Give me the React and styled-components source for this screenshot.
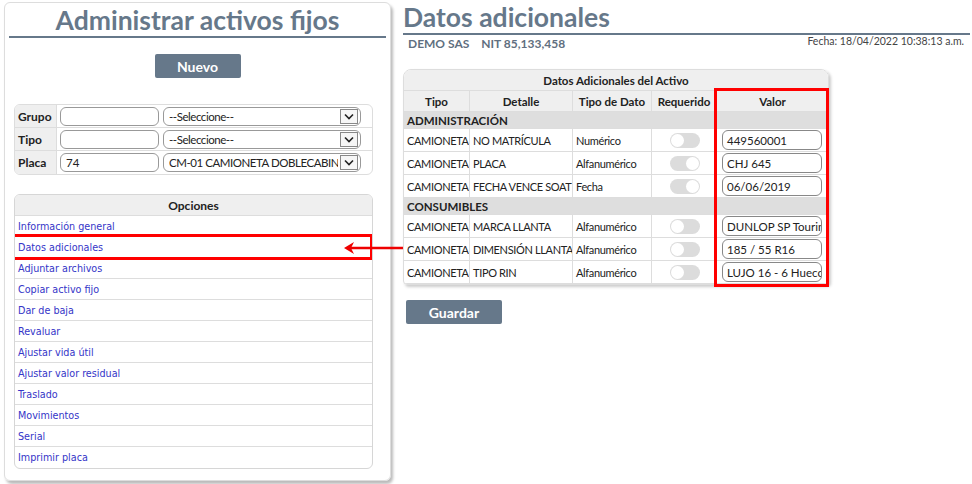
import React from 'react';
import styled, { createGlobalStyle } from 'styled-components';

const Global = createGlobalStyle`
  body { margin: 0; background: #fff; font-family: Lato, "Open Sans", sans-serif; color: #222; }
  * { box-sizing: border-box; }
`;

const Page = styled.div`
  display: flex; align-items: flex-start; width: 972px; height: 484px; position: relative;
`;

const LeftCard = styled.div`
  width: 387px; height: 479px; margin: 2px 0 0 4px; padding: 0 4px;
  border: 1px solid #ddd; border-radius: 6px; box-shadow: 2px 3px 3px #bbb;
  display: flex; flex-direction: column;
`;

const Title = styled.h1`
  margin: 0; padding-top: 2px; height: 35px; font-size: 26.5px; line-height: 30px; font-weight: 700;
  color: #66788a; text-align: ${p => p.$align || 'center'}; border-bottom: 2px solid #66788a;
`;

const Button = styled.button`
  width: ${p => p.$w}px; height: 24px; background: #66788a; color: #fff; border: none; border-radius: 2px;
  font-family: Lato, sans-serif; font-weight: 700; font-size: 14px; padding: 0;
`;

const Center = styled.div`
  display: flex; justify-content: center; margin-top: 16px;
`;

const FilterBox = styled.div`
  margin: 26px 0 0 5px; width: 359px; border: 1px solid #ddd; border-radius: 6px; overflow: hidden;
`;

const FilterRow = styled.div`
  display: flex; align-items: center; height: 23px; border-bottom: ${p => p.$last ? 'none' : '1px solid #ddd'};
`;

const FilterLabel = styled.div`
  width: 42px; height: 100%; background: #efefef; border-right: 1px solid #ddd; font-weight: 700; font-size: 12px;
  display: flex; align-items: center; padding-left: 3px;
`;

const TextBox = styled.div`
  height: 19px; width: ${p => p.$w}px; margin-left: ${p => p.$ml || 3}px; border: 1px solid #999; border-radius: 6px;
  font-size: 11.5px; padding-left: 5px; display: flex; align-items: center; white-space: nowrap; overflow: hidden;
`;

const SelectBox = styled(TextBox)`
  position: relative; padding-right: 22px; margin-left: 4px;
`;

const SelectText = styled.span`
  overflow: hidden; flex: 1; white-space: nowrap; letter-spacing: -0.45px;
`;

const Arrow = styled.span`
  position: absolute; right: 2px; top: 1px; width: 18px; height: 15px; border: 1px solid #888; background: #f6f6f6;
  display: flex; align-items: center; justify-content: center;
`;

const Chevron = () => (
  <Arrow>
    <svg width="10" height="7" viewBox="0 0 10 7"><path d="M1 1.5 L5 5.5 L9 1.5" fill="none" stroke="#222" strokeWidth="1.6" /></svg>
  </Arrow>
);

const Options = styled.div`
  margin: 19px 0 0 5px; width: 359px; border: 1px solid #d6d6d6; border-radius: 6px; overflow: hidden;
`;

const OptionsHead = styled.div`
  height: 21px; background: #efefef; border-bottom: 1px solid #ddd; font-weight: 700; font-size: 12px;
  display: flex; align-items: center; justify-content: center;
`;

const OptionRow = styled.div`
  height: 21px; border-bottom: ${p => p.$last ? 'none' : '1px solid #ddd'}; display: flex; align-items: center;
  padding-left: 3px; font-family: "DejaVu Sans Condensed", "DejaVu Sans", sans-serif; font-size: 10.7px; color: #3535c8;
  position: relative;
`;

const Highlight = styled.div`
  position: absolute; left: -5px; right: -1px; top: -3px; bottom: -3px; border: 3px solid #f00; pointer-events: none;
`;

const Right = styled.div`
  margin-left: 12px; width: 567px; display: flex; flex-direction: column; position: relative;
`;

const InfoBar = styled.div`
  display: flex; justify-content: space-between; align-items: flex-start; padding: 1px 0 0 5px;
`;

const Company = styled.div`
  display: flex; gap: 12px; font-weight: 700; font-size: 12px; color: #5f6f80;
`;

const DateText = styled.div`
  font-size: 10.5px; color: #444; padding-right: 6px; margin-top: -1px;
`;

const DataTable = styled.table`
  margin-top: 18px; border-collapse: separate; border-spacing: 0; width: 424px; font-size: 11px;
  border: 1px solid #ddd; border-radius: 8px 8px 4px 4px; box-shadow: 2px 2px 3px #ccc; overflow: hidden;
  table-layout: fixed;
`;

const Cell = styled.td`
  height: 23px; padding: 0 2px 0 3px; border-right: 1px solid #ddd; border-bottom: 1px solid #ddd; white-space: nowrap;
  overflow: hidden; letter-spacing: -0.35px; text-align: ${p => p.$center ? 'center' : 'left'};
  &:last-child { border-right: none; padding-left: 5px; letter-spacing: 0; }
`;

const HeadCell = styled.th`
  height: 21px; padding: 0 1px; background: #efefef; border-right: 1px solid #ddd; border-bottom: 1px solid #ddd;
  font-weight: 700; font-size: 11.5px; white-space: nowrap; overflow: hidden;
  &:last-child { border-right: none; }
`;

const SectionCell = styled.td`
  height: 17px; padding: 0 3px; background: #dedede; font-weight: 700; font-size: 11.5px; border-bottom: 1px solid #ddd;
`;

const Toggle = styled.span`
  display: inline-block; width: 30px; height: 15px; border-radius: 8px; background: #dcdcdc; position: relative; vertical-align: middle;
  &::after {
    content: ''; position: absolute; top: 1px; left: ${p => p.$on ? '16px' : '1px'}; width: 13px; height: 13px;
    border-radius: 50%; background: #fff;
  }
`;

const ValueBox = styled.div`
  height: 20px; width: 100px; border: 1px solid #888; border-radius: 6px; padding-left: 4px; font-size: 11.5px;
  display: flex; align-items: center; white-space: nowrap; overflow: hidden;
`;

const ValorFrame = styled.div`
  position: absolute; left: 311px; top: 88px; width: 115px; height: 199px; border: 3px solid #f00; pointer-events: none;
`;

const ArrowSvg = styled.svg`
  position: absolute; left: 340px; top: 240px;
`;

const options = [
  'Información general', 'Datos adicionales', 'Adjuntar archivos', 'Copiar activo fijo', 'Dar de baja', 'Revaluar',
  'Ajustar vida útil', 'Ajustar valor residual', 'Traslado', 'Movimientos', 'Serial', 'Imprimir placa',
];

const sections = [
  { name: 'ADMINISTRACIÓN', rows: [
    ['NO MATRÍCULA', 'Numérico', false, '449560001'],
    ['PLACA', 'Alfanumérico', true, 'CHJ 645'],
    ['FECHA VENCE SOAT', 'Fecha', true, '06/06/2019'],
  ] },
  { name: 'CONSUMIBLES', rows: [
    ['MARCA LLANTA', 'Alfanumérico', false, 'DUNLOP SP Touring'],
    ['DIMENSIÓN LLANTA', 'Alfanumérico', false, '185 / 55 R16'],
    ['TIPO RIN', 'Alfanumérico', false, 'LUJO 16 - 6 Huecos'],
  ] },
];

const filters = [
  ['Grupo', '', '--Seleccione--'],
  ['Tipo', '', '--Seleccione--'],
  ['Placa', '74', 'CM-01 CAMIONETA DOBLECABINA'],
];

export default function App() {
  return (
    <Page>
      <Global />
      <LeftCard>
        <Title>Administrar activos fijos</Title>
        <Center><Button $w={86}>Nuevo</Button></Center>
        <FilterBox>
          {filters.map(([label, val, sel], i) => (
            <FilterRow key={label} $last={i === filters.length - 1}>
              <FilterLabel>{label}</FilterLabel>
              <TextBox $w={99}>{val}</TextBox>
              <SelectBox $w={198}><SelectText>{sel}</SelectText><Chevron /></SelectBox>
            </FilterRow>
          ))}
        </FilterBox>
        <Options>
          <OptionsHead>Opciones</OptionsHead>
          {options.map((o, i) => (
            <OptionRow key={o} $last={i === options.length - 1}>
              {o}
              {i === 1 && <Highlight />}
            </OptionRow>
          ))}
        </Options>
      </LeftCard>
      <ArrowSvg width="66" height="16" viewBox="0 0 66 16">
        <line x1="64" y1="8" x2="10" y2="8" stroke="#e00" strokeWidth="2.5" />
        <path d="M4 8 L14 2 L11 8 L14 14 Z" fill="#e00" />
      </ArrowSvg>
      <Right>
        <Title $align="left">Datos adicionales</Title>
        <InfoBar>
          <Company><span>DEMO SAS</span><span>NIT 85,133,458</span></Company>
          <DateText>Fecha: 18/04/2022 10:38:13 a.m.</DateText>
        </InfoBar>
        <DataTable>
          <colgroup>
            <col style={{ width: 66 }} /><col style={{ width: 103 }} /><col style={{ width: 79 }} />
            <col style={{ width: 65 }} /><col style={{ width: 111 }} />
          </colgroup>
          <thead>
            <tr><HeadCell colSpan={5}>Datos Adicionales del Activo</HeadCell></tr>
            <tr>
              <HeadCell>Tipo</HeadCell><HeadCell>Detalle</HeadCell><HeadCell>Tipo de Dato</HeadCell>
              <HeadCell>Requerido</HeadCell><HeadCell>Valor</HeadCell>
            </tr>
          </thead>
          <tbody>
            {sections.map(s => (
              <React.Fragment key={s.name}>
                <tr><SectionCell colSpan={5}>{s.name}</SectionCell></tr>
                {s.rows.map(([det, tipo, on, val]) => (
                  <tr key={det}>
                    <Cell>CAMIONETA</Cell>
                    <Cell>{det}</Cell>
                    <Cell>{tipo}</Cell>
                    <Cell $center><Toggle $on={on} /></Cell>
                    <Cell><ValueBox>{val}</ValueBox></Cell>
                  </tr>
                ))}
              </React.Fragment>
            ))}
          </tbody>
        </DataTable>
        <ValorFrame />
        <div style={{ marginTop: 15, marginLeft: 3 }}><Button $w={96}>Guardar</Button></div>
      </Right>
    </Page>
  );
}
